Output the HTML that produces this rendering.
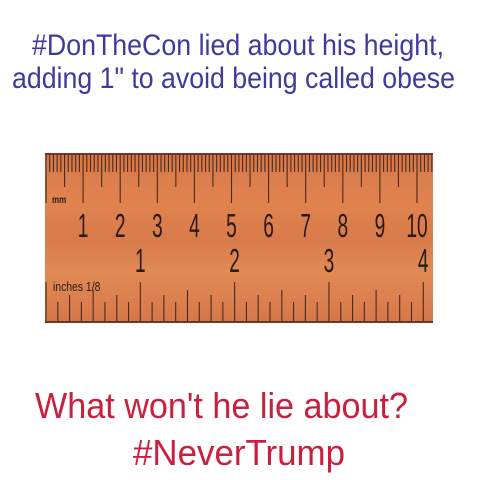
<!DOCTYPE html>
<html><head><meta charset="utf-8"><style>
html,body{margin:0;padding:0;background:#fff;width:480px;height:480px;overflow:hidden}
</style></head><body>
<svg id="s" width="480" height="480" xmlns="http://www.w3.org/2000/svg" font-family="Liberation Sans, sans-serif">
<rect width="480" height="480" fill="#fff"/>
<text x="32" y="55" font-size="30" fill="#3f3a9c" textLength="412" lengthAdjust="spacingAndGlyphs">#DonTheCon lied about his height,</text>
<text x="12" y="88" font-size="30" fill="#3f3a9c" textLength="443" lengthAdjust="spacingAndGlyphs">adding 1" to avoid being called obese</text>
<defs><linearGradient id="g" x1="0" y1="0" x2="0" y2="1">
<stop offset="0" stop-color="#d7774a"/><stop offset="0.3" stop-color="#e0844f"/><stop offset="0.5" stop-color="#d97a4a"/><stop offset="0.7" stop-color="#e18a55"/><stop offset="1" stop-color="#d6764a"/></linearGradient>
<clipPath id="c"><rect x="45" y="153" width="388" height="170"/></clipPath></defs>
<rect x="45" y="153" width="388" height="170" fill="url(#g)"/>
<rect x="45" y="153" width="388" height="2" fill="#6b3a22"/>
<rect x="45" y="321" width="388" height="2" fill="#6b3a22"/>
<g id="t" stroke="#4a2a1a" stroke-width="1.1"></g>
<g clip-path="url(#c)"><g font-size="33" fill="#2a1a12" id="n"></g></g>
<text x="52" y="203" font-size="10" fill="#2a1a12" font-weight="bold" transform="translate(52,0) scale(0.8,1) translate(-52,0)">mm</text>
<text x="53" y="291" font-size="13" fill="#2a1a12" transform="translate(53,0) scale(0.8,1) translate(-53,0)">inches 1/8</text>
<text x="35" y="418" font-size="36" fill="#c8203e" textLength="373" lengthAdjust="spacingAndGlyphs">What won't he lie about?</text>
<text x="133" y="465" font-size="36" fill="#c8203e" textLength="212" lengthAdjust="spacingAndGlyphs">#NeverTrump</text>
</svg>
<script>
var ns="http://www.w3.org/2000/svg",t=document.getElementById('t'),n=document.getElementById('n');
function L(x,y1,y2){var l=document.createElementNS(ns,'line');l.setAttribute('x1',x);l.setAttribute('x2',x);l.setAttribute('y1',y1);l.setAttribute('y2',y2);t.appendChild(l);}
function T(x,y,s){var e=document.createElementNS(ns,'text');e.setAttribute('x',0);e.setAttribute('y',0);e.setAttribute('text-anchor','middle');e.setAttribute('transform','translate('+x+','+y+') scale(0.58,1)');e.textContent=s;n.appendChild(e);}
for(var i=0;i<=104;i++){var x=46+i*3.71;if(x>432)break;L(x,155,i%10==0?203:i%5==0?187:172);}
for(var i=0;i<=10;i++)T(46+i*37.1-(i==0?8:0),237,String(i));
for(var i=0;i<=32;i++){var x=46+i*11.79;if(x>432)break;L(x,321,i%8==0?282:i%4==0?290:i%2==0?295:302);}
for(var i=0;i<=4;i++)T(46+i*94.3-(i==0?8:0),272,String(i));
</script>
</body></html>
